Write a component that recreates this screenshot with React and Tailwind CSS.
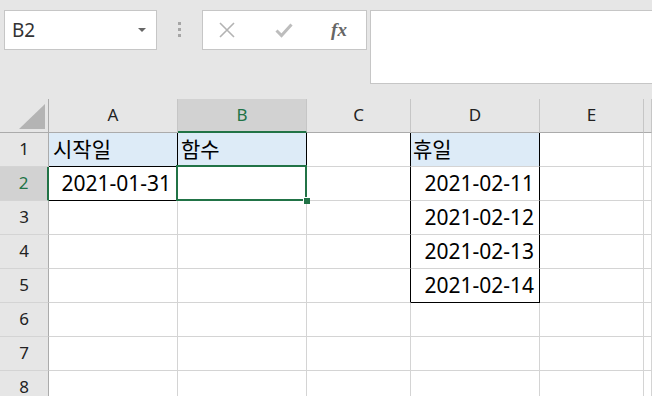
import React from "react";

const cols = ["A", "B", "C", "D", "E", ""];

function Cell({ children, className = "", inner = null }) {
  return (
    <div className={"relative box-border h-[34px] border-b border-r border-[#d4d4d4] flex items-center " + className}>
      {children}
      {inner}
    </div>
  );
}

export default function App() {
  const font = { fontFamily: '"Noto Sans", "Noto Sans CJK KR", sans-serif' };
  const rows = [1, 2, 3, 4, 5, 6, 7, 8];
  const dDates = { 2: "2021-02-11", 3: "2021-02-12", 4: "2021-02-13", 5: "2021-02-14" };

  return (
    <div className="w-[652px] h-[396px] overflow-hidden bg-white text-black" style={font}>
      {/* top toolbar */}
      <div className="h-[99px] bg-[#e6e6e6] flex items-start pt-[10px] pl-[4px]">
        <div className="w-[153px] h-[40px] box-border bg-white border border-[#c6c6c6] flex items-center pl-[7px] pr-[10px] justify-between">
          <span className="text-[19px] text-[#333]" style={{ fontFamily: '"Noto Sans", sans-serif' }}>B2</span>
          <svg width="8" height="5" viewBox="0 0 8 5"><path d="M0 0h8L4 4z" fill="#666" /></svg>
        </div>
        <div className="w-[45px] h-[40px] flex flex-col items-center justify-center gap-[3px] pb-[1px]">
          <div className="w-[3px] h-[3px] bg-[#a6a6a6]" />
          <div className="w-[3px] h-[3px] bg-[#a6a6a6]" />
          <div className="w-[3px] h-[3px] bg-[#a6a6a6]" />
        </div>
        <div className="w-[165px] h-[40px] box-border bg-white border border-[#c6c6c6] flex items-center">
          <div className="w-[48px] flex justify-center">
            <svg width="16" height="16" viewBox="0 0 16 16"><path d="M1 1L15 15M15 1L1 15" stroke="#b3b3b3" strokeWidth="1.6" /></svg>
          </div>
          <div className="w-[66px] flex justify-center">
            <svg width="18" height="16" viewBox="0 0 18 16"><path d="M1.5 8.5L6.5 13.5L16.5 2.5" stroke="#bdbdbd" strokeWidth="3" fill="none" /></svg>
          </div>
          <div className="w-[44px] flex justify-center">
            <span className="text-[19px] italic font-bold text-[#666]" style={{ fontFamily: '"Liberation Serif", serif' }}>fx</span>
          </div>
        </div>
        <div className="ml-[3px] flex-1 h-[74px] box-border bg-white border border-[#c6c6c6] border-r-0" />
      </div>

      {/* grid */}
      <div className="grid grid-cols-[49px_129px_129px_104px_129px_104px_1fr]">
        {/* header row */}
        <div className="box-border h-[34px] bg-[#e6e6e6] border-r border-b border-[#ababab] relative">
          <svg className="absolute left-[19px] top-[5px]" width="26" height="25" viewBox="0 0 26 25"><path d="M26 0V25H0z" fill="#b4b4b4" /></svg>
        </div>
        {cols.map((c, i) => (
          <div
            key={i}
            className={
              "box-border h-[34px] border-r flex items-center justify-center text-[17px] pb-[1px] " +
              (c === "B"
                ? "bg-[#d2d2d2] border-r-[#c6c6c6] border-b-2 border-b-[#217346] text-[#217346]"
                : "bg-[#e6e6e6] border-r-[#c6c6c6] border-b border-b-[#ababab] text-[#222]")
            }
          >
            {c}
          </div>
        ))}

        {rows.map((r) => (
          <React.Fragment key={r}>
            <div
              className={
                "box-border h-[34px] border-b border-[#d4d4d4] flex items-center justify-center text-[17px] pb-[1px] " +
                (r === 2
                  ? "bg-[#d2d2d2] text-[#217346] border-r-2 border-r-[#217346]"
                  : "bg-[#e6e6e6] text-[#222] border-r border-r-[#ababab]")
              }
            >
              {r}
            </div>
            {/* A */}
            <Cell
              className={
                (r === 1 ? "bg-[#ddebf7] border-r-black border-b-black pl-[4px] text-[21px]" : "") +
                (r === 2 ? "border-b-black justify-end pr-[6px] text-[21px]" : "")
              }
            >
              {r === 1 ? "시작일" : r === 2 ? "2021-01-31" : null}
            </Cell>
            {/* B */}
            <Cell
              className={
                (r === 1 ? "bg-[#ddebf7] border-r-black border-b-[#217346] pl-[3px] text-[21px]" : "") +
                (r === 2 ? "border-b-[#217346] border-r-[#217346]" : "")
              }
              inner={
                r === 2 ? (
                  <>
                    <div className="absolute z-10 left-[-2px] top-[-2px] right-[-1px] bottom-[-1px] border-2 border-[#217346]" />
                    <div className="absolute z-20 right-[-4px] bottom-[-4px] w-[7px] h-[7px] bg-[#217346] border-l border-t border-white" />
                  </>
                ) : null
              }
            >
              {r === 1 ? "함수" : null}
            </Cell>
            {/* C */}
            <Cell className={r <= 5 ? "border-r-black" : ""} />
            {/* D */}
            <Cell
              className={
                "border-r-[#d4d4d4] " +
                (r <= 5 ? "border-r-black " : "") +
                (r === 5 ? "border-b-black " : "") +
                (r === 1 ? "bg-[#ddebf7] pl-[2px] text-[21px]" : "") +
                (dDates[r] ? "justify-end pr-[5px] text-[21px]" : "")
              }
            >
              {r === 1 ? "휴일" : dDates[r] || null}
            </Cell>
            {/* E */}
            <Cell />
            {/* F */}
            <Cell />
          </React.Fragment>
        ))}
      </div>
    </div>
  );
}
